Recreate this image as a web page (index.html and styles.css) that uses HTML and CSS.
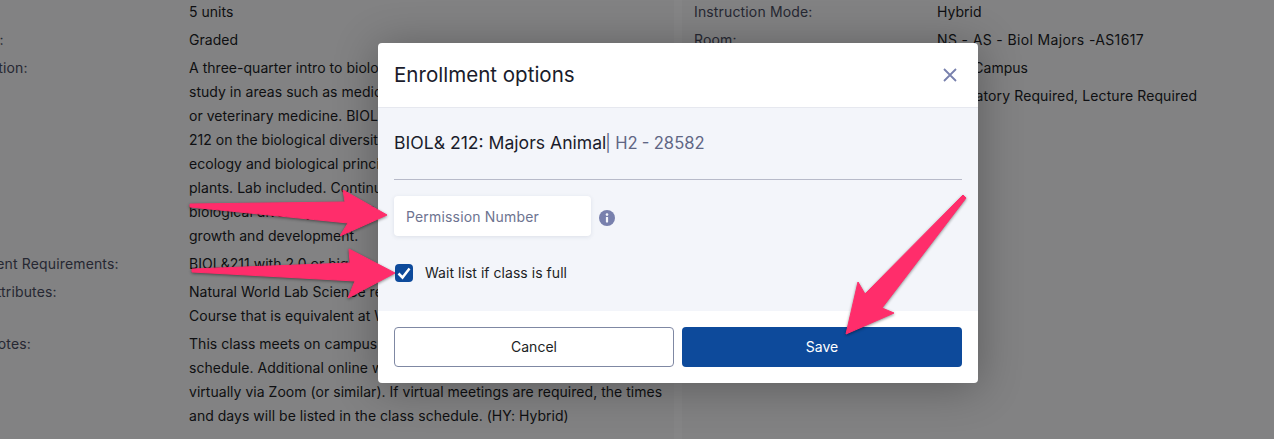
FILE: index.html
```html
<!DOCTYPE html>
<html lang="en">
<head>
<meta charset="utf-8">
<title>Enrollment options</title>
<link rel="stylesheet" href="styles.css">
</head>
<body>
<main class="page">
  <section class="panel panel-left">
    <div class="row"><div class="label">Units:</div><div class="value">5 units</div></div>
    <div class="row"><div class="label">Grading:</div><div class="value">Graded</div></div>
    <div class="row"><div class="label">Description:</div><div class="value">A three-quarter intro to biology for students preparing for further<br>study in areas such as medicine, dentistry, pharmacy, optometry<br>or veterinary medicine. BIOL&amp; 211 focuses on the cell; BIOL&amp;<br>212 on the biological diversity of animals, their evolution,<br>ecology and biological principles; BIOL&amp; 213 covers the biology of<br>plants. Lab included. Continues the study of life science with<br>biological diversity, animal form and function, reproduction,<br>growth and development.</div></div>
    <div class="row"><div class="label">Enrollment Requirements:</div><div class="value">BIOL&amp;211 with 2.0 or higher, or instructor permission.</div></div>
    <div class="row"><div class="label">Class Attributes:</div><div class="value">Natural World Lab Science requirement for the AA degree.<br>Course that is equivalent at Washington community colleges.</div></div>
    <div class="row"><div class="label">Class Notes:</div><div class="value">This class meets on campus at the times listed in the class<br>schedule. Additional online work is required, and may be held<br>virtually via Zoom (or similar). If virtual meetings are required, the times<br>and days will be listed in the class schedule. (HY: Hybrid)</div></div>
  </section>
  <section class="panel panel-right">
    <div class="row"><div class="label">Instruction Mode:</div><div class="value">Hybrid</div></div>
    <div class="row"><div class="label">Room:</div><div class="value value-room">NS - AS - Biol Majors -AS1617</div></div>
    <div class="row"><div class="label">Location:</div><div class="value">Main Campus</div></div>
    <div class="row"><div class="label">Components:</div><div class="value value-wide">Laboratory Required, Lecture Required</div></div>
  </section>
</main>

<div class="backdrop"></div>

<div class="modal" role="dialog">
  <header class="modal-head">
    <h2 class="modal-title">Enrollment options</h2>
    <svg class="close" viewBox="0 0 14 14" width="14" height="14"><path d="M1 1l12 12M13 1L1 13"/></svg>
  </header>
  <div class="modal-body">
    <p class="course">BIOL&amp; 212: Majors Animal<span class="section">| H2 - 28582</span></p>
    <hr class="divider">
    <div class="permission">
      <div class="input">Permission Number</div>
      <svg class="info" viewBox="0 0 16 16" width="16" height="16"><circle cx="8" cy="8" r="8" class="info-bg"/><circle cx="8" cy="4.6" r="1.3" class="info-fg"/><rect x="6.9" y="6.9" width="2.2" height="5.6" rx=".4" class="info-fg"/></svg>
    </div>
    <label class="wait">
      <span class="checkbox"><svg viewBox="0 0 18 18" width="18" height="18"><path d="M3.5 9.5l4 4 7-9"/></svg></span>
      <span>Wait list if class is full</span>
    </label>
  </div>
  <footer class="modal-foot">
    <button class="btn btn-cancel">Cancel</button>
    <button class="btn btn-save">Save</button>
  </footer>
</div>

<svg class="arrows" viewBox="0 0 1274 439" width="1274" height="439">
  <polygon points="190,204 345,202 343,190 387,215 340,236 348,223 190,207"/>
  <polygon points="192,269 350,263 349,249 395,273 348,298 355,281 192,272"/>
  <polygon points="963,195 966,198 882,308 894,313 846,334 858,282 865,294"/>
</svg>
</body>
</html>
```
FILE: styles.css
```css
* { box-sizing: border-box; }
html, body { margin: 0; height: 100%; }
body {
  width: 1274px;
  height: 439px;
  overflow: hidden;
  position: relative;
  background: #fff;
  font-family: Inter, "Liberation Sans", sans-serif;
  font-size: 14px;
  line-height: 24px;
  color: #1c1e24;
}
.page {
  display: flex;
  gap: 8px;
  margin-left: -54px;
  width: 1328px;
  height: 439px;
}
.panel { flex: 0 0 auto; background: #f9f9f9; }
.panel-left { width: 728px; }
.panel-right { width: 592px; padding-left: 12px; }
.row { display: flex; margin-bottom: 4px; }
.label { flex: 0 0 243px; color: #4a4d60; white-space: nowrap; letter-spacing: 0.15px; }
.value { flex: 1; white-space: nowrap; letter-spacing: 0.03px; }
.value-room { letter-spacing: 0.36px; }
.value-wide { letter-spacing: 0.11px; }
.backdrop {
  position: absolute;
  inset: 0;
  background: rgba(0, 0, 2, 0.48);
}
.modal {
  position: absolute;
  left: 378px;
  top: 43px;
  width: 600px;
  height: 340px;
  display: flex;
  flex-direction: column;
  border-radius: 4px;
  background: #fff;
  box-shadow: 0 4px 44px rgba(0, 0, 0, 0.3);
  overflow: hidden;
}
.modal-head {
  flex: 0 0 65px;
  display: flex;
  align-items: center;
  justify-content: space-between;
  padding: 0 21px 1px 16px;
  border-bottom: 1px solid #e6e8ef;
}
.modal-title {
  margin: 0;
  font-size: 20.55px;
  font-weight: 400;
  color: #1a1c2b;
}
.close path { stroke: #7880ad; stroke-width: 1.8; fill: none; }
.modal-body {
  flex: 1;
  background: #f3f5fa;
  padding: 0 16px;
}
.course {
  margin: 0;
  padding-top: 23px;
  height: 71px;
  font-size: 17.6px;
  color: #1a1c2b;
}
.section { color: #5f6684; font-size: 16.6px; margin-left: -1px; word-spacing: -0.4px; }
.divider {
  margin: 0;
  border: 0;
  height: 1px;
  background: #b7bac9;
}
.permission {
  display: flex;
  align-items: center;
  gap: 8px;
  margin-top: 16px;
}
.input {
  width: 197px;
  height: 40px;
  padding: 0 12px;
  line-height: 41px;
  background: #fff;
  border-radius: 4px;
  box-shadow: 0 1px 4px rgba(60, 70, 110, 0.12);
  color: #6d7390;
  letter-spacing: 0.17px;
}
.info { margin-top: 4px; }
.info-bg { fill: #7880ad; }
.info-fg { fill: #f3f5fa; }
.wait {
  display: flex;
  align-items: center;
  gap: 12px;
  margin: 25px 0 0 1px;
  color: #1c1e24;
  letter-spacing: 0.04px;
}
.checkbox {
  width: 18px;
  height: 18px;
  border-radius: 4px;
  background: #0d4a9b;
  display: block;
}
.checkbox svg { display: block; }
.checkbox path { fill: none; stroke: #fff; stroke-width: 2.5; }
.modal-foot {
  flex: 0 0 72px;
  display: flex;
  gap: 8px;
  padding: 16px 16px 0;
}
.btn {
  flex: 0 0 280px;
  height: 40px;
  border-radius: 4px;
  font: inherit;
  padding: 0;
}
.btn-cancel { background: #fff; border: 1px solid #7f88a3; color: #1c1e24; }
.btn-save { background: #0d4a9b; border: 0; color: #fff; }
.arrows {
  position: absolute;
  left: 0;
  top: 0;
  filter: drop-shadow(0 1px 1.5px rgba(0, 0, 0, 0.45));
}
.arrows polygon { fill: #ff2d6b; stroke: #ff2d6b; stroke-width: 1; stroke-linejoin: round; }
```
